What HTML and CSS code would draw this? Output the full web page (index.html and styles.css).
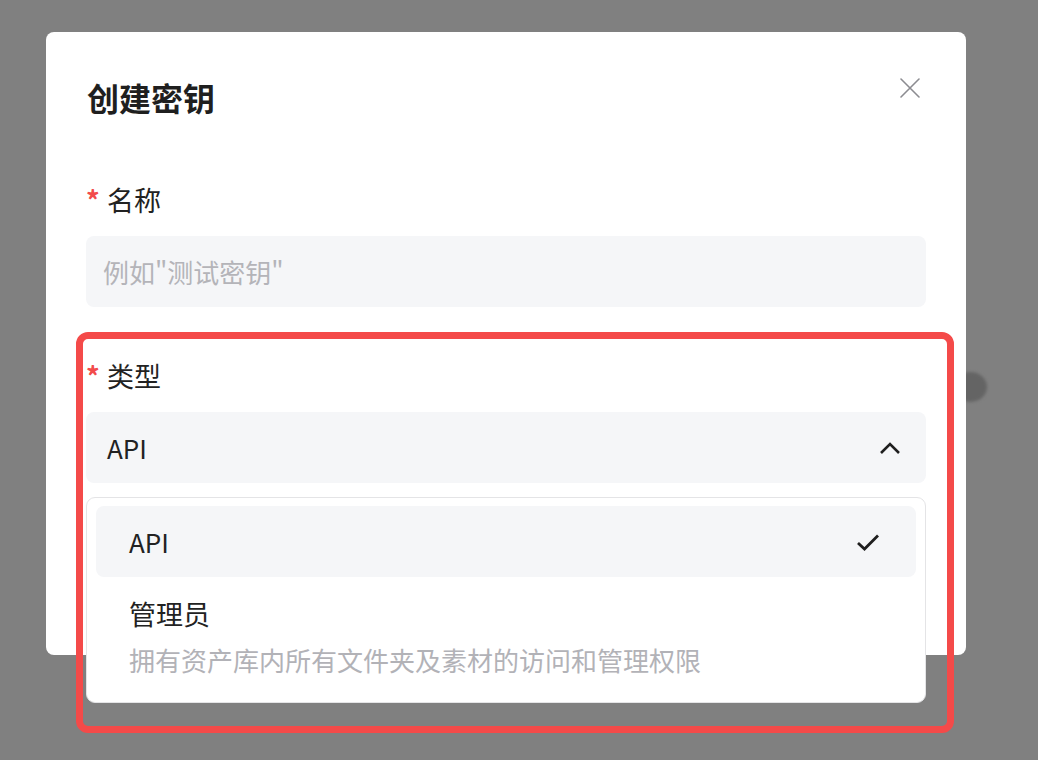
FILE: index.html
```html
<!DOCTYPE html>
<html lang="zh-CN">
<head>
<meta charset="utf-8">
<title>创建密钥</title>
<link rel="stylesheet" href="styles.css">
</head>
<body>
<div class="smudge"></div>
<div class="modal">
  <div class="header">
    <h1 class="title">创建密钥</h1>
    <button class="close" aria-label="关闭">
      <svg width="20" height="20" viewBox="0 0 20 20"><path d="M1 1L19 19M19 1L1 19" stroke="#8c8c91" stroke-width="1.6" fill="none" stroke-linecap="round"/></svg>
    </button>
  </div>

  <div class="field field-name">
    <label class="label"><span class="req">*</span>名称</label>
    <div class="input placeholder">例如"测试密钥"</div>
  </div>

  <div class="field field-type">
    <label class="label"><span class="req">*</span>类型</label>
    <div class="select-wrap">
      <div class="input select">
        <span>API</span>
        <svg class="chev" width="22" height="14" viewBox="0 0 22 14"><path d="M2 12L11 3L20 12" stroke="#1f1f1f" stroke-width="2.6" fill="none" stroke-linejoin="miter"/></svg>
      </div>
      <div class="dropdown">
        <div class="option active">
          <span>API</span>
          <svg width="24" height="20" viewBox="0 0 24 20"><path d="M2 11L8.5 17L22 3.5" stroke="#1f1f1f" stroke-width="2.8" fill="none"/></svg>
        </div>
        <div class="option option-desc">
          <div class="opt-title">管理员</div>
          <div class="opt-desc">拥有资产库内所有文件夹及素材的访问和管理权限</div>
        </div>
      </div>
    </div>
  </div>
</div>
<div class="highlight"></div>
</body>
</html>
```

FILE: styles.css
```css
* { box-sizing: border-box; }
html, body {
  margin: 0;
  padding: 0;
}
body {
  width: 1038px;
  height: 760px;
  overflow: hidden;
  background: #808080;
  font-family: "Noto Sans CJK SC", "Noto Sans", sans-serif;
  color: #222;
  position: relative;
  padding-top: 32px;
  padding-left: 46px;
}
.smudge {
  position: absolute;
  left: 954px;
  top: 372px;
  width: 33px;
  height: 30px;
  border-radius: 50%;
  background: #646464;
  filter: blur(1.5px);
}
.modal {
  position: relative;
  width: 920px;
  height: 623px;
  background: #fff;
  border-radius: 8px;
  padding: 45px 40px 0 40px;
}
.header {
  display: flex;
  justify-content: space-between;
  align-items: flex-start;
}
.title {
  margin: 0 0 0 1px;
  font-size: 32px;
  line-height: 40px;
  font-weight: 700;
  color: #1f1f1f;
}
.close {
  border: 0;
  background: none;
  padding: 0;
  margin: 1px 6px 0 0;
  width: 20px;
  height: 20px;
  display: block;
}
.close svg { display: block; }
.field-name { margin-top: 65px; }
.field-type { margin-top: 51px; }
.label {
  display: flex;
  align-items: flex-start;
  font-size: 27px;
  line-height: 36px;
  color: #222;
  height: 36px;
  margin-bottom: 18px;
}
.req {
  color: #f24b4b;
  font-size: 27px;
  font-weight: 700;
  line-height: 30px;
  width: 21px;
  padding-left: 0;
  margin-top: 3px;
}
.input {
  height: 71px;
  background: #f5f6f8;
  border-radius: 8px;
  padding: 0 20px;
  display: flex;
  align-items: center;
  font-size: 26px;
}
.placeholder {
  color: #b4b4b9;
  padding-left: 17px;
}
.select {
  justify-content: space-between;
  color: #222;
  padding-left: 21px;
  padding-right: 25px;
}
.chev { display: block; }
.select-wrap { position: relative; }
.dropdown {
  position: absolute;
  left: 0;
  right: 0;
  top: calc(100% + 14px);
  height: 206px;
  background: #fff;
  border: 1.5px solid #e4e4e6;
  border-radius: 9px;
  padding: 8px 9px;
}
.option {
  border-radius: 8px;
  padding: 0 36px 0 33px;
}
.option.active {
  height: 71px;
  background: #f5f6f8;
  display: flex;
  align-items: center;
  justify-content: space-between;
  font-size: 26px;
  color: #222;
}
.option.active svg { display: block; }
.option-desc {
  padding-top: 19px;
}
.opt-title {
  font-size: 27px;
  line-height: 36px;
  color: #222;
}
.opt-desc {
  margin-top: 10px;
  font-size: 26px;
  line-height: 36px;
  color: #b2b2b7;
  white-space: nowrap;
}
.highlight {
  position: absolute;
  left: 76px;
  top: 332px;
  width: 878px;
  height: 401px;
  border: 7px solid #f44a49;
  border-radius: 12px;
  pointer-events: none;
}
```
